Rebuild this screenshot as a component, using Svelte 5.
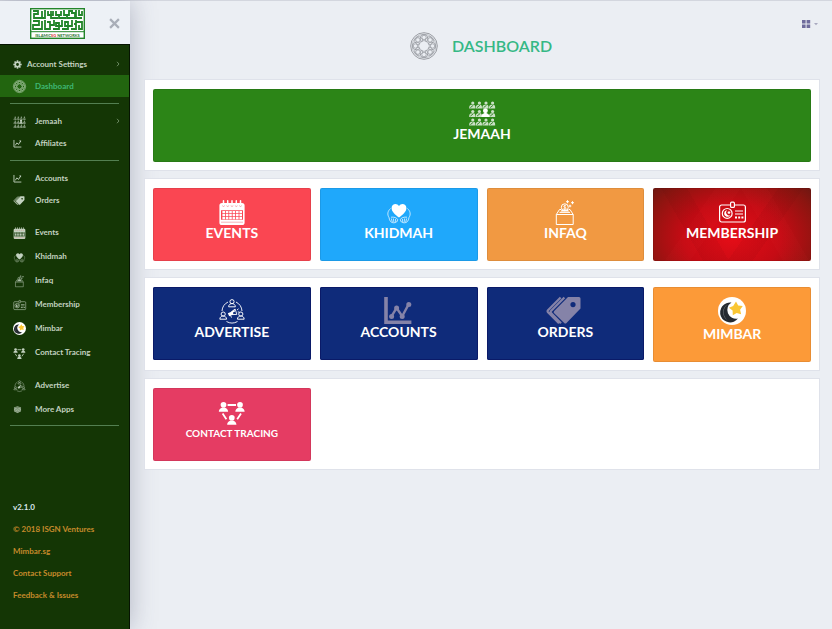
<script>
  const top = [
    { label: 'Account Settings', icon: 'gear', arrow: true, tight: true },
    { label: 'Dashboard', icon: 'rosette', active: true }
  ];
  const people = [
    { label: 'Jemaah', icon: 'crowd', arrow: true },
    { label: 'Affiliates', icon: 'line' }
  ];
  const sales = [
    { label: 'Accounts', icon: 'line' },
    { label: 'Orders', icon: 'tags' }
  ];
  const apps = [
    { label: 'Events', icon: 'calendar' },
    { label: 'Khidmah', icon: 'hands' },
    { label: 'Infaq', icon: 'donate' },
    { label: 'Membership', icon: 'card' },
    { label: 'Mimbar', icon: 'moon' },
    { label: 'Contact Tracing', icon: 'trace' }
  ];
  const extra = [
    { label: 'Advertise', icon: 'network' },
    { label: 'More Apps', icon: 'layers' }
  ];
  const links = ['© 2018 ISGN Ventures', 'Mimbar.sg', 'Contact Support', 'Feedback & Issues'];
  const rows = [
    [{ label: 'JEMAAH', icon: 'crowd', tone: 'green wide' }],
    [
      { label: 'EVENTS', icon: 'calendar', tone: 'red' },
      { label: 'KHIDMAH', icon: 'hands', tone: 'sky' },
      { label: 'INFAQ', icon: 'donate', tone: 'amber' },
      { label: 'MEMBERSHIP', icon: 'card', tone: 'crimson' }
    ],
    [
      { label: 'ADVERTISE', icon: 'network', tone: 'navy' },
      { label: 'ACCOUNTS', icon: 'chart', tone: 'navy' },
      { label: 'ORDERS', icon: 'tags', tone: 'navy muted' },
      { label: 'MIMBAR', icon: 'moon', tone: 'orange' }
    ],
    [{ label: 'CONTACT TRACING', icon: 'trace', tone: 'pink' }]
  ];
  const spokes = [0, 45, 90, 135, 180, 225, 270, 315];
</script>

{#snippet person(x, y, s)}
  <g transform="translate({x} {y}) scale({s})">
    <circle cx="0" cy="-2.4" r="2.6" />
    <path d="M-4.2 4 C-4.2 1 -2 .6 -1 0 H1 C2 .6 4.2 1 4.2 4Z" />
  </g>
{/snippet}

{#snippet icon(name)}
  <svg class="icon {name}" viewBox="0 0 28 28" aria-hidden="true">
    {#if name === 'gear'}
      <circle cx="14" cy="14" r="7" fill="none" stroke="currentColor" stroke-width="5" />
      {#each spokes as a}
        <rect x="11.5" y="1" width="5" height="6" fill="currentColor" transform="rotate({a} 14 14)" />
      {/each}
    {:else if name === 'rosette'}
      <g fill="none" stroke="currentColor">
        <circle cx="14" cy="14" r="13.3" stroke-width=".8" />
        <circle cx="14" cy="14" r="11.8" stroke-width=".5" />
        {#each spokes as a}
          <g transform="rotate({a} 14 14)" stroke-width=".6">
            <circle cx="14" cy="5.4" r="2.2" />
            <path d="M10.4 7C9.8 3.8 12 2.6 14 2.6s4.2 1.2 3.6 4.4M10.4 7c-.4 2 1.8 3.4 3.6 1.200 1.800 2.200 4 .8 3.600-1.200" />
          </g>
        {/each}
      </g>
    {:else if name === 'crowd'}
      {#each [7, 15.5, 24] as y, r}
        {#each [4.2, 10.8, 17.4, 24] as x, c}
          {#if r === 1 && c === 2}
            <g fill="currentColor">{@render person(x, y - 0.4, 0.95)}</g>
          {:else}
            <g fill="currentColor" opacity=".75">
              <circle cx={x + 0.6} cy={y - 2} r="1.6" />
              <path d="M{x - 3} {y + 3.4}c0-3 1-3.2 2.4-3.6h2.4c1.2.4 1.4 1.6 1.4 3.6z" />
            </g>
            <path d="M{x - 1.8} {y + 2.6}l3-2.4" class="cut" stroke-width=".9" />
          {/if}
        {/each}
      {/each}
    {:else if name === 'line'}
      <path d="M3 3V25H26M7 20l5-8 5 5 7-11" fill="none" stroke="currentColor" stroke-width="2.8" />
      <path d="M19 5h6v6z" fill="currentColor" />
    {:else if name === 'chart'}
      <g fill="none" stroke="currentColor">
        <path d="M1 1V26.2H26.4" stroke-width="3.6" />
        <path d="M6.6 20.2L11.6 12L17.2 20.2L23.6 8.4" stroke-width="2.4" />
      </g>
      <g fill="currentColor">
        <circle cx="6.6" cy="20.4" r="2.5" /><circle cx="11.6" cy="12" r="2.5" />
        <circle cx="17.2" cy="20.4" r="2.5" /><circle cx="23.8" cy="8.4" r="2.5" />
      </g>
    {:else if name === 'tags'}
      <path
        fill="currentColor"
        fill-rule="evenodd"
        d="M17 1H28a1.5 1.5 0 0 1 1.5 1.5V12.5L15.5 27a1.6 1.6 0 0 1-2.3 0L3.2 17.2a1.6 1.6 0 0 1 0-2.3ZM22 6a2.6 2.6 0 1 0 .01 5.2A2.6 2.6 0 0 0 22 6Z"
      />
      <path fill="none" stroke="currentColor" stroke-width="2.2" d="M13.4 1.4L0 14.9a1.4 1.4 0 0 0 0 2L10 27.3M9.6 1.4L-3 14.2a1.4 1.4 0 0 0 0 2L8 27.3" />
    {:else if name === 'calendar'}
      <path
        fill="currentColor"
        fill-rule="evenodd"
        d="M4 6H24a2.6 2.6 0 0 1 2.6 2.6V25.4A2.6 2.6 0 0 1 24 28H4A2.6 2.6 0 0 1 1.4 25.4V8.6A2.6 2.6 0 0 1 4 6ZM3 13.2V22.8H25V13.2Z"
      />
      <path d="M5.5 3.8V8M9.7 3.8V8M14 3.8V8M18.3 3.8V8M22.5 3.8V8" stroke="currentColor" stroke-width="1.5" stroke-linecap="round" />
      <g fill="none" stroke="#e8485a" stroke-width=".7" opacity=".6">
        <path d="M4.5 8.5a1 1 0 0 0 2 0M8.7 8.5a1 1 0 0 0 2 0M13 8.5a1 1 0 0 0 2 0M17.3 8.5a1 1 0 0 0 2 0M21.5 8.5a1 1 0 0 0 2 0M3 25.2H25" />
      </g>
      <g fill="currentColor">
        {#each [14, 17, 20] as y}
          {#each [4.4, 7.8, 11.2, 14.6, 18, 21.4] as x}
            <rect {x} {y} width="2.6" height="2.3" />
          {/each}
        {/each}
      </g>
    {:else if name === 'hands'}
      <path fill="currentColor" d="M14 20.600C10 17.400 6.600 14.800 6.600 11C6.600 6.600 12 5.400 14 9C16 5.400 21.400 6.600 21.400 11C21.400 14.800 18 17.400 14 20.600Z" />
      <g fill="none" stroke="currentColor" stroke-width=".7">
        <path d="M5.600 11.500C2.600 14 2 17.500 4 20.500C4.500 24 6 25.800 8.500 25.800C11 25.800 12.600 25 12.600 22.500C12 20.800 9 19.800 6 20.200" />
        <path d="M22.400 11.500C25.400 14 26 17.500 24 20.500C23.500 24 22 25.800 19.500 25.800C17 25.800 15.400 25 15.400 22.500C16 20.800 19 19.800 22 20.200" />
        <path d="M6.300 21.500l1 3.500M8.400 21.500l.5 3.800M10.500 22l.2 3M21.700 21.500l-1 3.500M19.600 21.500l-.5 3.800M17.500 22l-.2 3" />
      </g>
    {:else if name === 'donate'}
      <g fill="none" stroke="currentColor" stroke-width="1">
        <path d="M5.3 17.5H22.2V27.5H5.3ZM5.3 17.5L8.5 12.5H10M22.2 17.5L19 12.5H17.6M8.5 15.4H19" />
        <circle cx="13.8" cy="10.3" r="3.5" />
        <path d="M15 8.9C14 8 12.6 8.6 12.8 9.5C13 10.6 15 10 15 11.3C15 12.3 13.3 12.5 12.5 11.6M13.8 7.7V13" stroke-width=".8" />
        <path d="M16.5 3.2v3M15 4.7h3M21.5 4.2v3M20 5.7h3M19 7.7v2.6M17.7 9h2.6" />
      </g>
      <path d="M9.5 14.5h8.6l-1.5-2h-5.6z" fill="currentColor" />
    {:else if name === 'card'}
      <g fill="none" stroke="currentColor" stroke-width="1.2">
        <path d="M12 8H3.6A2 2 0 0 0 1.6 10V23A2 2 0 0 0 3.6 25H25.4A2 2 0 0 0 27.4 23V10A2 2 0 0 0 25.4 8H17" />
        <rect x="12.6" y="5.2" width="3.8" height="5.2" rx="1" />
        <circle cx="9.2" cy="16.4" r="4.9" />
        <path d="M17 14h8M17 17h8" />
        <path d="M17 20.6h8.5" stroke-width="2" stroke-dasharray="2 1.2" />
      </g>
      <path fill="currentColor" d="M9.5 13.2a3.3 3.3 0 1 0 3 4.7 2.6 2.6 0 1 1-3-4.7ZM11 13.5l.6 1.2 1.3.2-1 .9.2 1.3-1.1-.6-1.2.6.2-1.3-.9-.9 1.3-.2z" />
    {:else if name === 'moon'}
      <circle cx="14" cy="14" r="14" fill="#fff" />
      <path fill="#252a30" d="M13.5 5.5A10 10 0 1 0 20 21.6A8.8 8.8 0 0 1 13.5 5.5Z" />
      <path fill="#666c70" d="M9.5 7.2A9.5 9.5 0 0 0 9 23C4 17 5 11.500 9.5 7.2Z" />
      <path fill="#fac633" d="M18 4.6l2.2 3.9 4.5.4-2.6 3.8 1 4.5-4.4-1.3-3.9 2.4-.2-4.7-3.7-2.9 4.3-1.8z" />
    {:else if name === 'trace'}
      <g fill="currentColor">
        {@render person(5.5, 10.4, 1.1)}
        {@render person(22, 10.4, 1.1)}
        {@render person(13.8, 23.4, 1.1)}
      </g>
      <path d="M9.6 8H18M4.600 16.500L8.400 22.200M23 16.500L19.200 22.200" stroke="currentColor" stroke-width="1.800" />
    {:else if name === 'network'}
      <g fill="none" stroke="currentColor" stroke-width=".9">
        <path d="M10 6A11 11 0 0 0 4 15M18 6A11 11 0 0 1 24 15M8.5 25.5A11 11 0 0 0 19.5 25.5" />
        <g stroke-width="1.2">
          {@render person(14, 7.6, 0.8)}
          {@render person(5.2, 20, 0.8)}
          {@render person(22.8, 20, 0.8)}
        </g>
        <path d="M13.1 16.1l4-3.1 1.800 5.400-5 .2M12.500 19.200l1 2.400M19 14l1.500-1.200M19.800 16h1.600" />
      </g>
      <path d="M9.800 17.200l3.600-1.400 3-2.400 .6 2-2 1.200 .4 2-4.200 1.600z" fill="currentColor" />
    {:else if name === 'layers'}
      <path d="M14 3L25 8V19L14 25L3 19V8Z" fill="currentColor" opacity=".55" />
      <path d="M3 8.5L14 13.5L25 8.5M3 13.5L14 18.5L25 13.5M3 18.5L14 23.5L25 18.5" fill="none" stroke="currentColor" stroke-width="1.6" />
    {/if}
  </svg>
{/snippet}

{#snippet menu(items, roomy)}
  <ul class:roomy>
    {#each items as item}
      <li>
        <a href="#top" class:active={item.active} class:tight={item.tight}>
          <span class="slot">{@render icon(item.icon)}</span>
          <span>{item.label}</span>
          {#if item.arrow}
            <svg class="arrow" viewBox="0 0 4 6" aria-hidden="true"><path d="M1 .8L3 3L1 5.200" fill="none" stroke="currentColor" /></svg>
          {/if}
        </a>
      </li>
    {/each}
  </ul>
{/snippet}

<div class="page" id="top">
  <aside>
    <div class="brand">
      <svg class="logo" viewBox="0 0 55 31" role="img" aria-label="IslamicSG Networks">
        <rect x=".7" y=".7" width="53.6" height="29.6" fill="#fff" stroke="#23852a" stroke-width="1.4" />
        <path
          fill="none"
          stroke="#23852a"
          stroke-width="1.8"
          d="M3 3H8V6H4V10H12V3M15 2V10H10M18 3V7H23V3M21 3V10H28M26 3V7H31V3M29 7V10H36M34 2V7H39V3H43M37 7V10H45V5H41M46 2V10H52M49 2V7H52V3M3 13H9V17H3V21H12V13M15 12V21H20V14H17M20 17H24V12M23 21H29V15H26V18H32V12M32 21H38V14H35V18H42V12M41 21H46V16H44M46 12V14H52V21H49V17"
        />
        <path d="M0 23.7H55" stroke="#23852a" />
        <text x="27.5" y="28.8" text-anchor="middle">ISLAMIC<tspan>SG</tspan> NETWORKS</text>
      </svg>
      <button class="close" aria-label="Close menu">
        <svg viewBox="0 0 10 10"><path d="M1 1L9 9M9 1L1 9" stroke="currentColor" stroke-width="2" /></svg>
      </button>
    </div>
    <nav>
      {@render menu(top)}
      <hr />
      {@render menu(people)}
      <hr />
      {@render menu(sales)}
      {@render menu(apps, true)}
      {@render menu(extra, true)}
      <hr class="last" />
    </nav>
    <footer>
      <span>v2.1.0</span>
      {#each links as link}<a href="#top">{link}</a>{/each}
    </footer>
  </aside>

  <main>
    <header>
      {@render icon('rosette')}
      <h1>DASHBOARD</h1>
      <button class="switch" aria-label="Choose layout">
        <svg viewBox="0 0 16 8">
          <path d="M0 0h3.6v3.6H0zM4.6 0h3.6v3.6H4.6zM0 4.4h3.6V8H0zM4.6 4.4h3.6V8H4.6z" fill="#6f6c9c" />
          <path d="M12 3h4l-2 2.2z" fill="#a9a9bf" />
        </svg>
      </button>
    </header>
    {#each rows as row}
      <section>
        {#each row as tile}
          <a href="#top" class="tile {tile.tone}">
            {@render icon(tile.icon)}
            <span>{tile.label}</span>
          </a>
        {/each}
      </section>
    {/each}
  </main>
</div>

<style>
  :global(body) {
    margin: 0;
    background: #ebeef3;
    font-family: Lato, 'Open Sans', sans-serif;
  }
  .page {
    display: flex;
    min-height: 100vh;
    box-sizing: border-box;
    border-top: 1px solid #d3d6de;
  }
  a {
    text-decoration: none;
    color: inherit;
  }
  button {
    padding: 0;
    border: 0;
    background: none;
    display: flex;
  }
  .icon {
    display: block;
    width: 28px;
    height: 28px;
    overflow: visible;
  }
  .cut {
    stroke: #2a7f1b;
  }
  aside {
    width: 130px;
    flex: none;
    box-sizing: border-box;
    display: flex;
    flex-direction: column;
    background: #143605;
    border-right: 1px solid #061402;
    box-shadow: 0 0 24px rgba(70, 75, 105, 0.35);
    font-size: 8px;
    font-weight: 700;
    color: #c3d2c0;
  }
  .brand {
    display: flex;
    align-items: center;
    justify-content: space-between;
    box-sizing: border-box;
    height: 44px;
    padding: 1px 10px 0 30px;
    margin-right: -1px;
    background: #edf1f6;
    border-bottom: 1px solid #061402;
  }
  .logo {
    width: 55px;
    height: 31px;
  }
  .logo text {
    font: 700 4px Lato, sans-serif;
    fill: #23702a;
  }
  .logo tspan {
    fill: #e02b2b;
  }
  .close {
    color: #a9aeb8;
  }
  .close svg {
    width: 11px;
    height: 11px;
  }
  nav {
    padding-top: 8px;
  }
  ul {
    list-style: none;
    margin: 0;
    padding: 0;
  }
  li a {
    display: flex;
    align-items: center;
    height: 22px;
    padding: 0 9px 0 13px;
  }
  .roomy {
    margin-top: 9px;
  }
  .roomy a {
    height: 24px;
  }
  .slot {
    width: 22px;
    flex: none;
  }
  .slot .icon {
    width: 13px;
    height: 13px;
  }
  .slot .cut {
    stroke: #143605;
  }
  .slot .line,
  .slot .gear,
  .slot .layers {
    width: 9px;
    height: 9px;
  }
  .slot .tags {
    width: 9px;
    height: 9px;
    margin-left: 2px;
  }
  .tight .slot {
    width: 14px;
  }
  .active {
    background: #22650f;
    color: #3fb774;
  }
  .active .icon {
    color: #9dbf96;
  }
  .active circle,
  .active path {
    stroke-width: 1.2;
  }
  .arrow {
    width: 4px;
    height: 6px;
    margin-left: auto;
    color: #6c8a62;
  }
  hr {
    height: 1px;
    margin: 6px 10px;
    border: 0;
    background: #537f51;
  }
  .last {
    margin-top: 4px;
  }
  footer {
    display: flex;
    flex-direction: column;
    margin-top: auto;
    padding: 0 13px 23px;
    line-height: 22px;
    color: #c58a2b;
  }
  footer span {
    color: #dce8ee;
  }
  main {
    flex: 1;
    display: flex;
    flex-direction: column;
    gap: 7px;
    padding: 0 12px 20px 14px;
  }
  header {
    position: relative;
    display: flex;
    align-items: center;
    justify-content: center;
    gap: 14px;
    height: 53px;
    padding: 18px 2px 0 0;
    color: #85888e;
  }
  h1 {
    margin: 0;
    font-size: 16px;
    line-height: 20px;
    font-weight: 600;
    color: #35b885;
  }
  .switch {
    position: absolute;
    top: 19px;
    right: 2px;
  }
  .switch svg {
    width: 16px;
    height: 8px;
  }
  section {
    display: grid;
    grid-template-columns: repeat(4, 1fr);
    align-items: start;
    gap: 9px;
    padding: 9px 8px 8px;
    background: #fff;
    border: 1px solid #dfe2ea;
  }
  .tile {
    display: flex;
    flex-direction: column;
    align-items: center;
    padding: 9px 0 20px;
    border-radius: 2px;
    color: #fff;
    font-size: 14px;
    font-weight: 700;
    line-height: 16px;
    box-shadow: inset 0 0 0 1px rgba(0, 0, 0, 0.08);
  }
  .tile .chart,
  .muted .icon {
    color: #8583a8;
  }
  .wide {
    grid-column: 1 / -1;
  }
  .green {
    background: #2c8517;
  }
  .red {
    background: #fa4652;
  }
  .sky {
    background: #1fa8fb;
  }
  .amber {
    background: #f19942;
  }
  .crimson {
    background:
      linear-gradient(125deg, transparent 30%, rgba(255, 60, 60, 0.04) 30% 42%, transparent 42% 60%, rgba(60, 0, 0, 0.05) 60% 72%, transparent 72%),
      linear-gradient(60deg, transparent 25%, rgba(60, 0, 0, 0.05) 25% 38%, transparent 38% 65%, rgba(255, 60, 60, 0.04) 65% 78%, transparent 78%),
      radial-gradient(ellipse 62% 96% at 50% 68%, #e50d17 0%, #c50b14 50%, #8c1510 90%, #4e1a14 125%);
  }
  .navy {
    background: #0f2b7a;
    box-shadow: inset 0 0 0 1px #0a1a68;
  }
  .orange {
    background: #fc9a38;
  }
  .orange .icon {
    height: 30px;
  }
  .pink {
    background: #e53c63;
    font-size: 10px;
  }
</style>
